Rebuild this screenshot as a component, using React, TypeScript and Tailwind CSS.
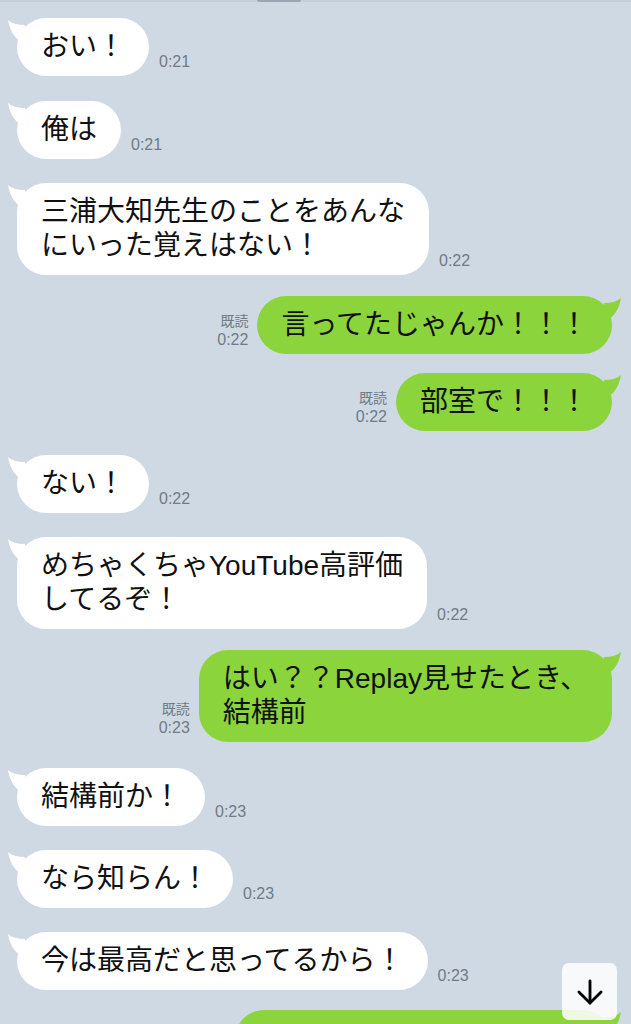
import { ArrowDown } from 'lucide-react';

type Msg = { side: 'in' | 'out'; lines: string[]; time: string; mt: string; cut?: boolean };

const messages: Msg[] = [
  { side: 'in', lines: ['おい！'], time: '0:21', mt: 'mt-[18px]' },
  { side: 'in', lines: ['俺は'], time: '0:21', mt: 'mt-[25px]' },
  { side: 'in', lines: ['三浦大知先生のことをあんな', 'にいった覚えはない！'], time: '0:22', mt: 'mt-[24px]' },
  { side: 'out', lines: ['言ってたじゃんか！！！'], time: '0:22', mt: 'mt-[21px]' },
  { side: 'out', lines: ['部室で！！！'], time: '0:22', mt: 'mt-[19px]' },
  { side: 'in', lines: ['ない！'], time: '0:22', mt: 'mt-[24px]' },
  { side: 'in', lines: ['めちゃくちゃYouTube高評価', 'してるぞ！'], time: '0:22', mt: 'mt-[24px]' },
  { side: 'out', lines: ['はい？？Replay見せたとき、', '結構前'], time: '0:23', mt: 'mt-[21px]' },
  { side: 'in', lines: ['結構前か！'], time: '0:23', mt: 'mt-[26px]' },
  { side: 'in', lines: ['なら知らん！'], time: '0:23', mt: 'mt-[24px]' },
  { side: 'in', lines: ['今は最高だと思ってるから！'], time: '0:23', mt: 'mt-[24px]' },
  { side: 'out', lines: ['　'], time: '0:23', mt: 'mt-[20px]', cut: true },
];

function Tail({ color, flip }: { color: string; flip?: boolean }) {
  return (
    <svg
      width="20"
      height="26"
      viewBox="0 0 20 26"
      className={flip ? 'absolute -right-[12px] top-0 -scale-x-100' : 'absolute -left-[12px] top-0'}
    >
      <path d="M3 2 Q 8 7 20 7 L 20 26 Q 6 20 3 2 Z" fill={color} />
    </svg>
  );
}

function Bubble({ msg }: { msg: Msg }) {
  const out = msg.side === 'out';
  return (
    <div
      className={`relative rounded-[29px] px-6 py-3 text-[28px] leading-[34px] text-[#111] ${
        out ? 'bg-[#8cd43b]' : 'bg-white'
      }`}
    >
      <Tail color={out ? '#8cd43b' : '#ffffff'} flip={out} />
      <div className="relative">
        {msg.lines.map((l, i) => (
          <div key={i} className="whitespace-nowrap">
            {l}
          </div>
        ))}
      </div>
    </div>
  );
}

export default function App() {
  return (
    <div
      className="relative h-[1024px] w-[631px] overflow-hidden bg-[#cfd9e3]"
      style={{ fontFamily: '"Liberation Sans", "Noto Sans CJK JP", sans-serif' }}
    >
      <div className="h-[2px] w-full bg-[#c3ced9]" />
      <div className="absolute left-[257px] top-0 h-[2px] w-[44px] rounded-b bg-[#9aa6b3]" />
      <div className="-mt-[2px] flex flex-col">
        {messages.map((m, i) =>
          m.side === 'in' ? (
            <div key={i} className={`flex items-end gap-[10px] pl-[17px] ${m.mt}`}>
              <Bubble msg={m} />
              <span className="mb-[5px] text-[16px] leading-[19px] text-[#6f7b88]">{m.time}</span>
            </div>
          ) : (
            <div key={i} className={`flex items-end justify-end gap-[9px] pr-[19px] ${m.mt}`}>
              {!m.cut && (
                <div className="mb-[4px] flex flex-col items-end text-[#6f7b88]">
                  <span className="text-[14px] leading-[18px]">既読</span>
                  <span className="text-[16px] leading-[20px]">{m.time}</span>
                </div>
              )}
              <div className={m.cut ? 'w-[377px]' : ''}>
                <Bubble msg={m} />
              </div>
            </div>
          )
        )}
      </div>
      <div className="absolute left-[562px] top-[963px] flex h-[57px] w-[55px] items-center justify-center rounded-[7px] bg-white/85">
        <ArrowDown size={38} strokeWidth={1.8} className="text-black" />
      </div>
    </div>
  );
}
